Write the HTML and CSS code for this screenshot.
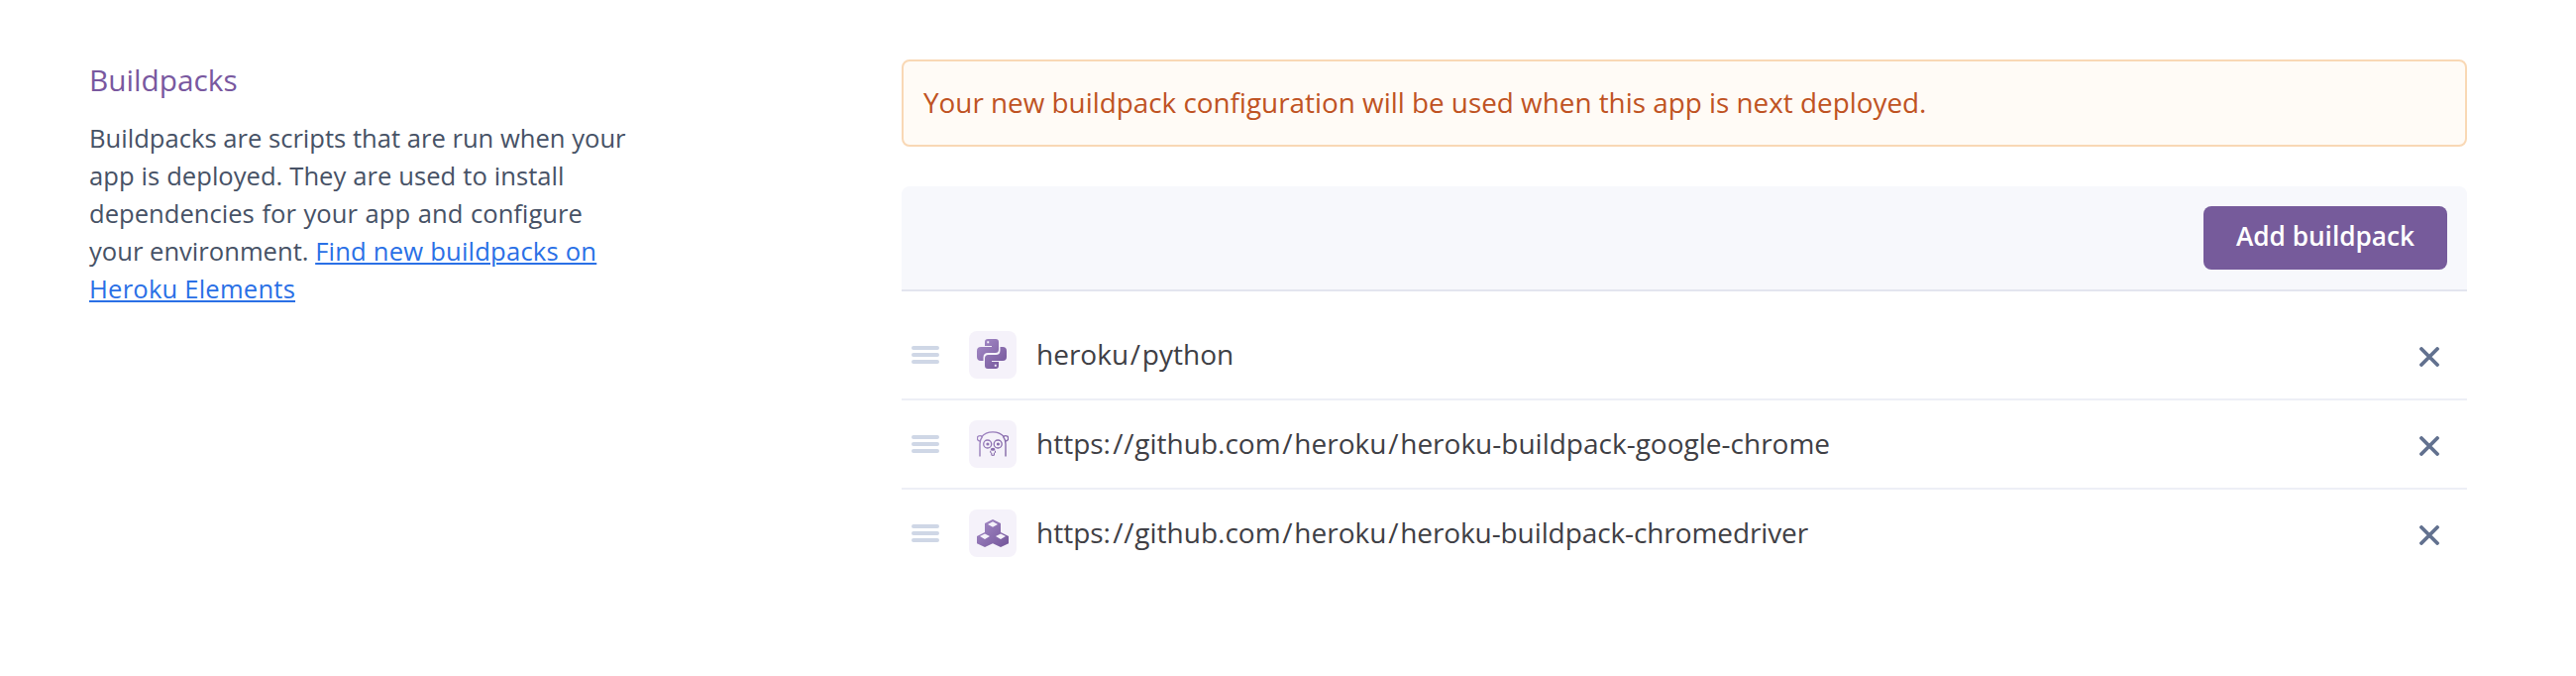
FILE: index.html
```
<!DOCTYPE html>
<html lang="en">
<head>
<meta charset="utf-8">
<title>Buildpacks</title>
<link rel="stylesheet" href="styles.css">
</head>
<body>
<svg class="defs" width="0" height="0" aria-hidden="true">
  <defs>
    <linearGradient id="purple" gradientUnits="userSpaceOnUse" x1="0" y1="0" x2="30" y2="30">
      <stop offset="0" stop-color="#a68cc8"/>
      <stop offset="1" stop-color="#735599"/>
    </linearGradient>
    <symbol id="grip" viewBox="0 0 28 18">
      <path d="M2 2h24M2 9h24M2 16h24" fill="none" stroke="#cfd7e6" stroke-width="4" stroke-linecap="round"/>
    </symbol>
    <symbol id="close" viewBox="0 0 20 20">
      <path d="M2 2l16 16M18 2L2 18" fill="none" stroke="#62718f" stroke-width="3.8" stroke-linecap="round"/>
    </symbol>
  </defs>
</svg>
<main class="settings">
  <section class="intro">
    <h2 class="intro-title">Buildpacks</h2>
    <p class="intro-text">Buildpacks are scripts that are run when your<br><span class="loose">app is deployed. They are used to install</span><br><span class="looser">dependencies for your app and configure</span><br>your environment. <a class="link" href="#">Find new buildpacks on<br>Heroku Elements</a></p>
  </section>
  <section class="content">
    <div class="alert"><span class="alert-text">Your new buildpack configuration will be used when this app is next deployed.</span></div>
    <div class="toolbar"><button class="button" type="button">Add buildpack</button></div>
    <ul class="list">
      <li class="row">
        <svg class="grip"><use href="#grip"/></svg>
        <span class="badge">
          <svg width="32" height="32" viewBox="0 0 32 32" fill="url(#purple)" fill-rule="evenodd">
            <path d="M8 3q0-3 3-3h8q3 0 3 3v7.500q0 3.500-3.500 3.500h-7.500q-4.500 0-4.500 4.500v3.500h-2.500q-4 0-4-4v-6q0-4 4-4h11v-1h-7zM10.300 2.300v1.900h1.900v-1.900z"/>
            <path d="M22 27q0 3-3 3h-8q-3 0-3-3v-7.500q0-3.500 3.500-3.500h7.500q4.500 0 4.500-4.500v-3.500h2.500q4 0 4 4v6q0 4-4 4h-11v1h7zM19.700 27.700v-1.900h-1.900v1.900z"/>
          </svg>
        </span>
        <span class="name">heroku<span class="slash">/</span>python</span>
        <svg class="close"><use href="#close"/></svg>
      </li>
      <li class="row">
        <svg class="grip"><use href="#grip"/></svg>
        <span class="badge">
          <svg width="32" height="26" viewBox="0 0 32 26" fill="none" stroke="url(#purple)" stroke-width="1.300">
            <path d="M4.500 6C10-.8 22-.8 27.500 6M3 25.500V13q0-4.500 2.500-7.500M29 25.500V13q0-4.500-2.500-7.500"/>
            <path d="M3 10.200C-.8 9-.2 4.600 3 4.600q1.500 0 2.500 1.100M29 10.200C32.800 9 32.200 4.600 29 4.600q-1.500 0-2.500 1.100"/>
            <circle cx="10.700" cy="13" r="4"/><circle cx="21.200" cy="13" r="4"/>
            <path d="M13.800 19.700q-1 2.300 1 2.300v2.300h2.600v-2.300q2 0 1-2.300" stroke-width="1"/>
            <g fill="url(#purple)" stroke="none"><circle cx="10.900" cy="13" r="1.600"/><circle cx="21.400" cy="13" r="1.600"/><ellipse cx="16.100" cy="18.300" rx="2.300" ry="1.500"/></g>
          </svg>
        </span>
        <span class="name">https:<span class="slashes">//</span>github.com<span class="slash">/</span>heroku<span class="slash">/</span>heroku-buildpack-google-chrome</span>
        <svg class="close"><use href="#close"/></svg>
      </li>
      <li class="row">
        <svg class="grip"><use href="#grip"/></svg>
        <span class="badge">
          <svg width="32" height="28" viewBox="0 0 32 28" fill="url(#purple)" fill-rule="evenodd">
            <path d="M16 0l8 4v9l8 4v7.200L24 28l-8-3.800L8 28l-8-3.800V17l8-4V4zM16 2.200L11 4.900l5 2.800 5-2.800zM8 14.400l-5 2.700 5 2.800 5-2.800zM24 14.400l-5 2.700 5 2.800 5-2.800z"/>
          </svg>
        </span>
        <span class="name">https:<span class="slashes">//</span>github.com<span class="slash">/</span>heroku<span class="slash">/</span><span class="tight">heroku-buildpack-chromedriver</span></span>
        <svg class="close"><use href="#close"/></svg>
      </li>
    </ul>
  </section>
</main>
</body>
</html>
```
FILE: styles.css
```
* { box-sizing: border-box; }
body {
  margin: 0;
  background: #fff;
  font-family: "Open Sans", "Noto Sans", sans-serif;
}
.defs { display: block; }
.settings {
  display: grid;
  grid-template-columns: 820px 1580px;
  padding: 60px 110px 0 90px;
}
.intro { padding-top: 1px; }
.intro-title {
  margin: 0 0 20px;
  color: #79589f;
  font-size: 29.8px;
  font-weight: 400;
  line-height: 40px;
}
.intro-text {
  margin: 0;
  color: #475266;
  font-size: 25.6px;
  line-height: 38px;
  white-space: nowrap;
}
.loose { word-spacing: 0.35px; }
.looser { word-spacing: 1px; }
.link {
  color: #2a70e6;
  letter-spacing: 0.2px;
  text-decoration: underline;
  text-decoration-thickness: 2px;
  text-underline-offset: 2px;
}
.alert {
  display: flex;
  align-items: center;
  height: 88px;
  padding: 0 20px 2px;
  border: 2px solid #f9d8b5;
  border-radius: 8px;
  background: #fffbf6;
  color: #bf5323;
  font-size: 27.85px;
}
.toolbar {
  display: flex;
  justify-content: flex-end;
  height: 106px;
  margin-top: 40px;
  padding: 20px 20px 0;
  border-bottom: 2px solid #e3e5ef;
  border-radius: 8px 8px 0 0;
  background: #f7f8fc;
}
.button {
  width: 246px;
  height: 64px;
  padding: 0 0 4px;
  border: 0;
  border-radius: 8px;
  background: #765b9b;
  color: #fff;
  font: 600 26.2px/60px "Open Sans", "Noto Sans", sans-serif;
}
.list {
  margin: 0;
  padding: 20px 0 0;
  list-style: none;
}
.row {
  display: flex;
  align-items: center;
  height: 90px;
  padding: 0 28px 0 10px;
  border-bottom: 2px solid #edeff6;
}
.row:last-child { border-bottom-color: transparent; }
.grip {
  width: 28px;
  height: 18px;
}
.badge {
  display: flex;
  align-items: center;
  justify-content: center;
  width: 48px;
  height: 48px;
  margin: 0 20px 0 30px;
  border-radius: 8px;
  background: #f5f2fa;
}
.name {
  padding-bottom: 2px;
  color: #3f4045;
  font-size: 28px;
  white-space: nowrap;
}
.slash { padding: 0 1.75px; }
.slashes {
  padding-left: 2.4px;
  letter-spacing: 0.7px;
}
.tight { letter-spacing: -0.1px; }
.close {
  width: 20px;
  height: 20px;
  margin: 4px 0 0 auto;
}
```
